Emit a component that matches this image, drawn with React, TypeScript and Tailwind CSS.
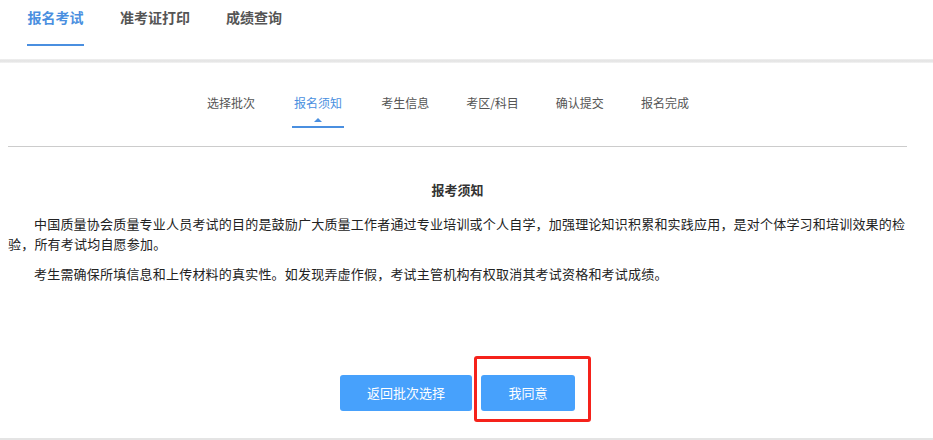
import React from 'react';

const topTabs = ['报名考试', '准考证打印', '成绩查询'];
const steps = ['选择批次', '报名须知', '考生信息', '考区/科目', '确认提交', '报名完成'];

const App = () => {
    return (
        <div
            className="w-[933px] h-[440px] bg-white overflow-hidden flex flex-col"
            style={{ fontFamily: '"Noto Sans CJK SC", "Liberation Sans", sans-serif' }}
        >
            {/* top tabs */}
            <div className="h-[59px] flex gap-[36px] pl-[27px] pt-[7px]">
                {topTabs.map((tab, i) => (
                    <div key={tab} className="flex flex-col items-center">
                        <span
                            className={`text-[14px] leading-[20px] font-bold ${
                                i === 0 ? 'text-[#4a8fe0]' : 'text-[#555]'
                            }`}
                        >
                            {tab}
                        </span>
                        {i === 0 && <div className="mt-[17px] h-[2px] w-[57px] bg-[#4a8fe0]" />}
                    </div>
                ))}
            </div>
            <div className="h-[4px] bg-gradient-to-b from-[#f0f0f0] via-[#e2e2e2] to-[#f4f4f4]" />

            <div className="w-[899px] ml-[8px] flex flex-col flex-1">
                {/* steps */}
                <div className="flex justify-center gap-[37px] pr-[19px] pt-[30px] pb-[18px] border-b border-[#cccccc]">
                    {steps.map((s, i) => (
                        <div key={s} className="flex flex-col items-center">
                            <span
                                className={`text-[12px] leading-[20px] ${
                                    i === 1 ? 'text-[#4a8fe0]' : 'text-[#555]'
                                }`}
                            >
                                {s}
                            </span>
                            <div className="h-[15px] w-full flex flex-col items-center">
                                {i === 1 && (
                                    <>
                                        <div className="mt-[5px] w-0 h-0 border-l-[4px] border-r-[4px] border-b-[4px] border-l-transparent border-r-transparent border-b-[#4a8fe0]" />
                                        <div className="mt-[4px] h-[2px] w-[52px] bg-[#4a8fe0]" />
                                    </>
                                )}
                            </div>
                        </div>
                    ))}
                </div>

                {/* notice */}
                <h2 className="mt-[33px] text-center text-[13px] leading-[20px] font-bold text-[#333]">报考须知</h2>
                <div className="mt-[14px] text-[13px] leading-[20px] text-[#222] tracking-[0.2px]">
                    <p className="indent-[2em] mb-[10px]">
                        中国质量协会质量专业人员考试的目的是鼓励广大质量工作者通过专业培训或个人自学，加强理论知识积累和实践应用，是对个体学习和培训效果的检验，所有考试均自愿参加。
                    </p>
                    <p className="indent-[2em]">
                        考生需确保所填信息和上传材料的真实性。如发现弄虚作假，考试主管机构有权取消其考试资格和考试成绩。
                    </p>
                </div>

                {/* buttons */}
                <div className="mt-[91px] flex justify-center gap-[9px]">
                    <button className="w-[132px] h-[36px] rounded-[3px] bg-[#47a1fc] text-white text-[13px]">
                        返回批次选择
                    </button>
                    <div className="relative">
                        <button className="w-[94px] h-[36px] rounded-[3px] bg-[#47a1fc] text-white text-[13px]">
                            我同意
                        </button>
                        <div className="absolute left-[-7px] top-[-19px] w-[117px] h-[66px] border-[3px] border-[#f5221b] rounded-[3px]" />
                    </div>
                </div>
            </div>

            <div className="h-[2px] bg-[#e4e4e4]" />
        </div>
    );
};

export default App;
